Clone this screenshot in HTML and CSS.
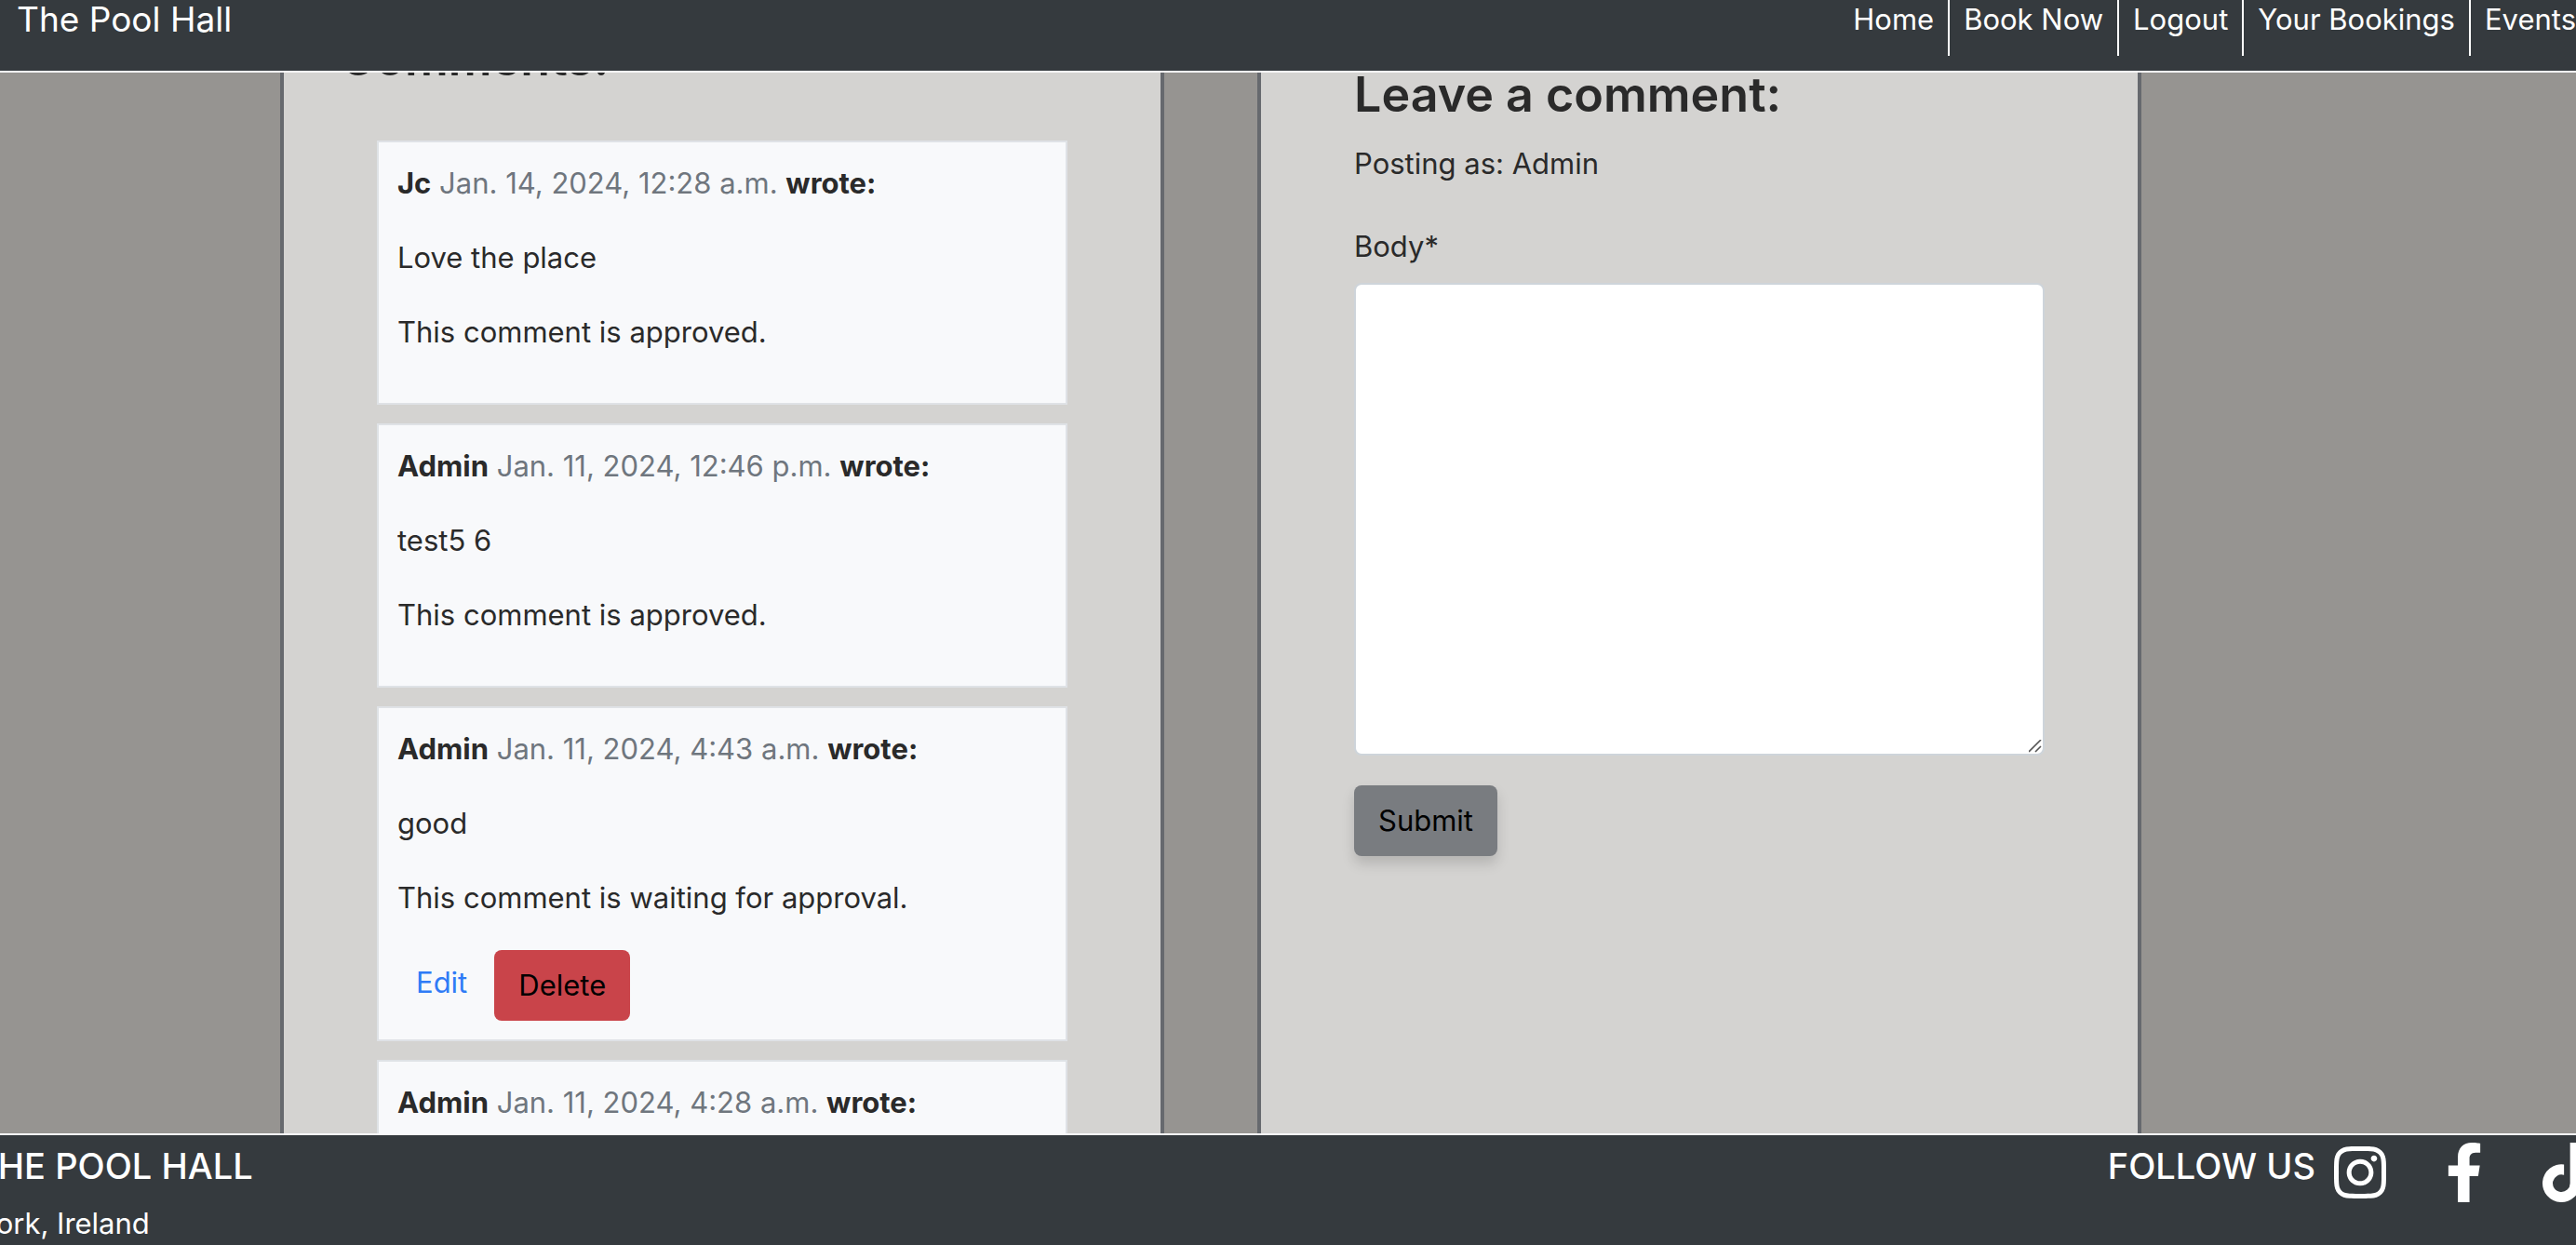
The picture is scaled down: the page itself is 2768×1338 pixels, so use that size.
FILE: index.html
```html
<!DOCTYPE html>
<html lang="en">
<head>
<meta charset="utf-8">
<title>The Pool Hall</title>
<link rel="stylesheet" href="styles.css">
</head>
<body>
<header class="site-header">
  <a class="brand" href="#">The Pool Hall</a>
  <nav class="nav">
    <a href="#">Home</a>
    <a href="#">Book Now</a>
    <a href="#">Logout</a>
    <a href="#">Your Bookings</a>
    <a href="#">Events</a>
  </nav>
</header>
<main class="viewport">
  <div class="columns">
    <section class="panel comments">
      <h2 class="title">Comments:</h2>
      <div class="comment-list">
        <article class="comment">
          <p><b>Jc</b> <span class="date">Jan. 14, 2024, 12:28 a.m.</span> <b>wrote:</b></p>
          <p>Love the place</p>
          <p>This comment is approved.</p>
        </article>
        <article class="comment">
          <p><b>Admin</b> <span class="date">Jan. 11, 2024, 12:46 p.m.</span> <b>wrote:</b></p>
          <p>test5 6</p>
          <p>This comment is approved.</p>
        </article>
        <article class="comment">
          <p><b>Admin</b> <span class="date">Jan. 11, 2024, 4:43 a.m.</span> <b>wrote:</b></p>
          <p>good</p>
          <p>This comment is waiting for approval.</p>
          <div class="actions">
            <a class="edit" href="#">Edit</a>
            <button class="btn btn-delete" type="button">Delete</button>
          </div>
        </article>
        <article class="comment">
          <p><b>Admin</b> <span class="date">Jan. 11, 2024, 4:28 a.m.</span> <b>wrote:</b></p>
        </article>
      </div>
    </section>
    <section class="panel reply">
      <h2 class="title">Leave a comment:</h2>
      <p class="posting">Posting as: Admin</p>
      <form class="form">
        <label for="body">Body*</label>
        <textarea id="body" name="body" required></textarea>
        <button class="btn btn-submit" type="submit">Submit</button>
      </form>
    </section>
  </div>
</main>
<footer class="site-footer">
  <div class="address">
    <h3 class="footer-title">THE POOL HALL</h3>
    <p>Cork, Ireland</p>
  </div>
  <div class="social">
    <h3 class="footer-title">FOLLOW US</h3>
    <div class="icons">
      <a href="#" aria-label="Instagram"><svg viewBox="0 0 448 512"><path d="M224.1 141c-63.6 0-114.9 51.3-114.9 114.9s51.3 114.9 114.9 114.9S339 319.5 339 255.9 287.7 141 224.1 141zm0 189.6c-41.1 0-74.7-33.5-74.7-74.7s33.5-74.7 74.7-74.7 74.7 33.5 74.7 74.7-33.6 74.7-74.7 74.7zm146.4-194.3c0 14.9-12 26.8-26.8 26.8-14.9 0-26.8-12-26.8-26.8s12-26.8 26.8-26.8 26.8 12 26.8 26.8zm76.1 27.2c-1.7-35.9-9.9-67.7-36.2-93.9-26.2-26.2-58-34.4-93.9-36.2-37-2.1-147.9-2.1-184.9 0-35.8 1.7-67.6 9.9-93.9 36.1s-34.4 58-36.2 93.9c-2.1 37-2.1 147.9 0 184.9 1.7 35.9 9.9 67.7 36.2 93.9s58 34.4 93.9 36.2c37 2.1 147.9 2.1 184.9 0 35.9-1.7 67.7-9.9 93.9-36.2 26.2-26.2 34.4-58 36.2-93.9 2.1-37 2.1-147.8 0-184.8zM398.8 388c-7.8 19.6-22.9 34.7-42.6 42.6-29.5 11.7-99.5 9-132.1 9s-102.7 2.6-132.1-9c-19.6-7.8-34.7-22.9-42.6-42.6-11.7-29.5-9-99.5-9-132.1s-2.6-102.7 9-132.1c7.8-19.6 22.9-34.7 42.6-42.6 29.5-11.7 99.5-9 132.1-9s102.7-2.6 132.1 9c19.6 7.8 34.7 22.9 42.6 42.6 11.7 29.5 9 99.5 9 132.1s2.7 102.7-9 132.1z"/></svg></a>
      <a href="#" aria-label="Facebook"><svg viewBox="0 0 320 512"><path d="M279.14 288l14.22-92.66h-88.91v-60.13c0-25.35 12.42-50.06 52.24-50.06h40.42V6.26S260.43 0 225.36 0c-73.22 0-121.08 44.38-121.08 124.72v70.62H22.89V288h81.39v224h100.17V288z"/></svg></a>
      <a href="#" aria-label="TikTok"><svg viewBox="0 0 448 512"><path d="M448 209.91a210.06 210.06 0 0 1-122.77-39.25V349.38A162.55 162.55 0 1 1 185 188.31V278.2a74.62 74.62 0 1 0 52.23 71.18V0h88a121.18 121.18 0 0 0 1.86 22.17A122.18 122.18 0 0 0 381 102.39a121.43 121.43 0 0 0 67 20.14z"/></svg></a>
    </div>
  </div>
</footer>
</body>
</html>
```
FILE: styles.css
```css
* { box-sizing: border-box; }

body {
  margin: 0;
  height: 100vh;
  display: flex;
  flex-direction: column;
  overflow: hidden;
  background: #969491;
  color: #2a2a2a;
  font-family: Inter, Roboto, "Liberation Sans", sans-serif;
  font-size: 31px;
  line-height: 48px;
}

h2, h3, p { margin: 0; font-weight: 400; }
a { color: inherit; text-decoration: none; }

.site-header {
  flex: none;
  display: flex;
  justify-content: space-between;
  align-items: flex-start;
  padding: 0 0 16px 18px;
  border-bottom: 2px solid #faf9fb;
  background: #353a3e;
  color: #fff;
  line-height: 42px;
}

.brand { font-size: 37px; }

.nav { display: flex; }
.nav a {
  padding: 0 15px 18px;
  border-right: 2px solid #fff;
}
.nav a:last-child { padding-right: 0; border-right: 0; }

.viewport {
  flex: 1;
  min-height: 0;
  overflow: hidden;
  padding: 0 467px 0 301px;
}

/* The columns are scrolled a little way under the header. */
.columns {
  display: grid;
  grid-template-columns: 1fr 1fr;
  gap: 100px;
  min-height: 100%;
  margin-top: -64px;
}

.panel {
  background: #d4d3d1;
  border: solid #66696e;
  border-width: 0 4px;
}

.title {
  font-size: 52px;
  font-weight: 600;
  line-height: 68px;
}

.comments { padding: 15px 60px 0; }
.comment-list {
  display: flex;
  flex-direction: column;
  gap: 20px;
  padding: 54px 40px 0;
}

.comment {
  padding: 20px;
  border: 2px solid #dfe2e6;
  background: #f8f9fb;
}
.comment p { padding-bottom: 32px; }
.date { color: #6f767e; }

.actions { display: flex; gap: 29px; padding-left: 20px; }
.edit { color: #2f7bf6; line-height: 70px; }

.btn {
  height: 76px;
  padding: 0 26px;
  border: 0;
  border-radius: 8px;
  color: #000;
  font: inherit;
}
.btn-delete { background: #c9444a; }
.btn-submit {
  background: #797c80;
  box-shadow: 0 8px 14px rgba(0, 0, 0, .15);
}

.reply { padding: 54px 100px 0; }
.posting { padding-top: 16px; }
.form {
  display: flex;
  flex-direction: column;
  align-items: flex-start;
  padding-top: 41px;
}
.form textarea {
  width: 100%;
  height: 508px;
  margin: 15px 0 32px;
  padding: 12px 24px;
  border: 2px solid #ced4da;
  border-radius: 8px;
  background: #fff;
  font: inherit;
}
.form textarea::-webkit-resizer {
  background: url("data:image/svg+xml,%3Csvg xmlns='http://www.w3.org/2000/svg' viewBox='0 0 15 15'%3E%3Cpath d='M0 13L13 0M7 13L13 7' stroke='%23555' stroke-width='1.6'/%3E%3C/svg%3E") center / 15px 15px no-repeat;
}

.site-footer {
  flex: none;
  display: flex;
  justify-content: space-between;
  align-items: flex-start;
  margin: 0 -20px 0 -27px;
  padding-top: 8px;
  border-top: 2px solid #faf9fb;
  background: #353a3e;
  color: #fff;
}
.footer-title {
  padding-bottom: 14px;
  font-size: 38px;
  font-weight: 500;
  line-height: 50px;
}
.address p { line-height: 46px; }

.social { display: flex; gap: 20px; }
.icons { display: flex; gap: 64px; }
.icons svg {
  display: block;
  height: 64px;
  fill: #fff;
}
```
